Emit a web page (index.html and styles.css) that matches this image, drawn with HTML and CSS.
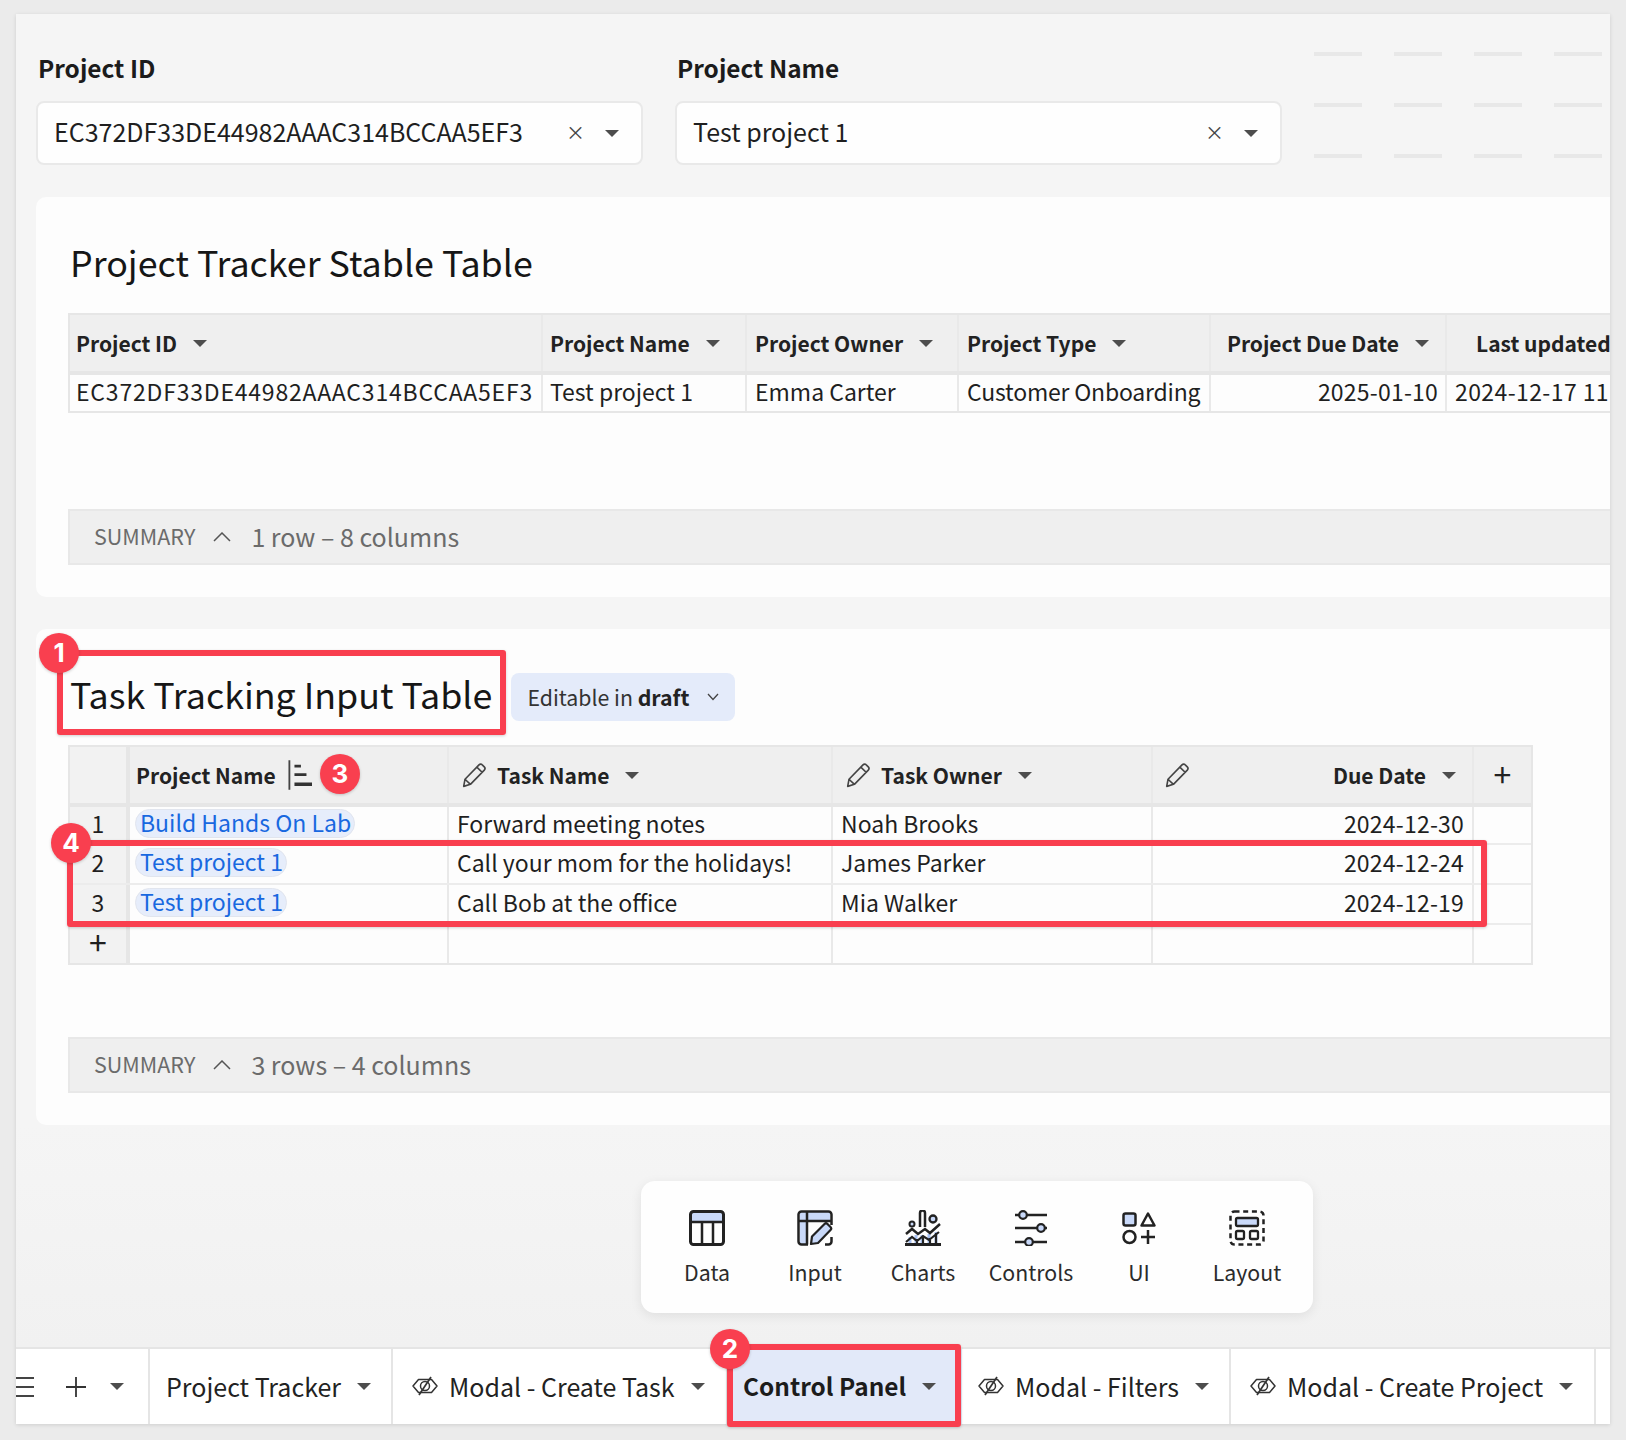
FILE: index.html
```html
<!DOCTYPE html>
<html lang="en">
<head>
<meta charset="utf-8">
<title>Control Panel</title>
<link rel="stylesheet" href="styles.css">
</head>
<body>
<svg class="defs" width="0" height="0" aria-hidden="true">
  <defs>
    <symbol id="pencil" viewBox="0 0 24 24">
      <path d="M2.500 22.500l1.200-6.600L16.600 2.600c.9-.9 2.200-.9 3 0l1.900 1.900c.8.8.8 2.100 0 3L8.700 20.600z M3.700 15.900l5 4.700 M14.600 4.700l4.900 4.800" fill="none" stroke="#444" stroke-width="1.500" stroke-linejoin="round"/>
    </symbol>
    <symbol id="eyeoff" viewBox="0 0 26 20">
      <path d="M1 10l5.500-6.500h13L25 10l-5.500 6.500h-13z" fill="none" stroke="#333" stroke-width="1.500" stroke-linejoin="round"/>
      <circle cx="13" cy="10" r="4.500" fill="none" stroke="#333" stroke-width="1.500"/>
      <path d="M19 1L7 19" fill="none" stroke="#333" stroke-width="1.700"/>
    </symbol>
  </defs>
</svg>
<div class="window">
  <main class="main">
    <section class="controls">
      <div class="control">
        <div class="control-label">Project ID</div>
        <div class="select"><span class="select-value">EC372DF33DE44982AAAC314BCCAA5EF3</span><span class="clear">×</span><span class="caret"></span></div>
      </div>
      <div class="control">
        <div class="control-label">Project Name</div>
        <div class="select"><span class="select-value">Test project 1</span><span class="clear">×</span><span class="caret"></span></div>
      </div>
      <div class="dashes">
        <i></i><i></i><i></i><i></i>
        <i></i><i></i><i></i><i></i>
        <i></i><i></i><i></i><i></i>
      </div>
    </section>

    <section class="card card-first">
      <h2 class="title">Project Tracker Stable Table</h2>
      <div class="table table-stable">
        <div class="row head">
          <div class="cell"><b>Project ID</b><span class="caret"></span></div>
          <div class="cell"><b>Project Name</b><span class="caret"></span></div>
          <div class="cell"><b>Project Owner</b><span class="caret"></span></div>
          <div class="cell"><b>Project Type</b><span class="caret"></span></div>
          <div class="cell right"><b>Project Due Date</b><span class="caret"></span></div>
          <div class="cell last-updated"><b>Last updated</b></div>
        </div>
        <div class="row body">
          <div class="cell id-cell">EC372DF33DE44982AAAC314BCCAA5EF3</div>
          <div class="cell">Test project 1</div>
          <div class="cell">Emma Carter</div>
          <div class="cell type-cell">Customer Onboarding</div>
          <div class="cell right date">2025-01-10</div>
          <div class="cell date updated-cell">2024-12-17 11:02:45</div>
        </div>
      </div>
      <div class="summary summary-stable"><span class="summary-key">SUMMARY</span><svg class="chev" viewBox="0 0 18 10"><path d="M1 9l8-8 8 8" fill="none" stroke="#555" stroke-width="1.500"/></svg><span class="summary-val">1 row – 8 columns</span></div>
    </section>

    <section class="card card-second">
      <div class="title-row">
        <h2 class="title">Task Tracking Input Table</h2>
        <div class="draft"><span>Editable in <b>draft</b></span><svg class="draft-chev" viewBox="0 0 12 8"><path d="M1 1l5 5.500L11 1" fill="none" stroke="#444" stroke-width="1.300"/></svg></div>
      </div>
      <div class="table table-input">
        <div class="row head">
          <div class="cell num"></div>
          <div class="cell"><b>Project Name</b>
            <svg class="sort" viewBox="0 0 26 32"><path d="M1.500 0v32" stroke="#444" stroke-width="2" fill="none"/><path d="M7 5h7v3H7zM7 14h13v3H7zM7 24h19v4H7z" fill="#333"/></svg>
          </div>
          <div class="cell pencil-cell"><svg class="pencil"><use href="#pencil"/></svg><b>Task Name</b><span class="caret"></span></div>
          <div class="cell pencil-cell"><svg class="pencil"><use href="#pencil"/></svg><b>Task Owner</b><span class="caret"></span></div>
          <div class="cell pencil-cell due"><svg class="pencil"><use href="#pencil"/></svg><b class="push">Due Date</b><span class="caret"></span></div>
          <div class="cell plus">+</div>
        </div>
        <div class="row body first-row">
          <div class="cell num">1</div>
          <div class="cell chip-cell"><span class="chip">Build Hands On Lab</span></div>
          <div class="cell">Forward meeting notes</div>
          <div class="cell">Noah Brooks</div>
          <div class="cell right date">2024-12-30</div>
          <div class="cell"></div>
        </div>
        <div class="row body">
          <div class="cell num">2</div>
          <div class="cell chip-cell"><span class="chip">Test project 1</span></div>
          <div class="cell">Call your mom for the holidays!</div>
          <div class="cell">James Parker</div>
          <div class="cell right date">2024-12-24</div>
          <div class="cell"></div>
        </div>
        <div class="row body">
          <div class="cell num">3</div>
          <div class="cell chip-cell"><span class="chip">Test project 1</span></div>
          <div class="cell">Call Bob at the office</div>
          <div class="cell">Mia Walker</div>
          <div class="cell right date">2024-12-19</div>
          <div class="cell"></div>
        </div>
        <div class="row body add-row">
          <div class="cell num">+</div>
          <div class="cell"></div>
          <div class="cell"></div>
          <div class="cell"></div>
          <div class="cell"></div>
          <div class="cell"></div>
        </div>
      </div>
      <div class="summary summary-input"><span class="summary-key">SUMMARY</span><svg class="chev" viewBox="0 0 18 10"><path d="M1 9l8-8 8 8" fill="none" stroke="#555" stroke-width="1.500"/></svg><span class="summary-val">3 rows – 4 columns</span></div>
    </section>

    <nav class="palette">
      <div class="tool">
        <svg class="tool-icon" viewBox="0 0 36 36"><path d="M3 2h30v10H2V3z" fill="#c9d9f9"/><rect x="1.500" y="1.500" width="33" height="33" rx="3" fill="none" stroke="#222" stroke-width="3"/><path d="M1.500 12h33M13 12v22M24 12v22" fill="none" stroke="#222" stroke-width="2.500"/></svg>
        <span>Data</span>
      </div>
      <div class="tool">
        <svg class="tool-icon" viewBox="0 0 36 36"><path d="M3 2h30v9H10v24H3z" fill="#c9d9f9"/><path d="M11 34.500H4.500a3 3 0 0 1-3-3V4.500a3 3 0 0 1 3-3h27a3 3 0 0 1 3 3V15M1.500 11h33M10 1.500v33M34.500 27v4.500a3 3 0 0 1-3 3H28" fill="none" stroke="#222" stroke-width="2.500"/><path d="M14 34l1-7.500L27.500 14c1-1 2-1 3 0l3 3c1 1 1 2 0 3L21 33z" fill="#c9d9f9" stroke="#222" stroke-width="2.200" stroke-linejoin="round"/></svg>
        <span>Input</span>
      </div>
      <div class="tool">
        <svg class="tool-icon" viewBox="0 0 36 36"><path d="M5 34V27M11 34V25M17 34V25M24 34V24M31 34V22" stroke="#a9c2f2" stroke-width="3" fill="none"/><path d="M15 17V3a2.500 2.500 0 0 1 5 0v14" fill="none" stroke="#222" stroke-width="2.500"/><circle cx="28" cy="9" r="3.500" fill="#c9d9f9" stroke="#222" stroke-width="2.300"/><circle cx="7" cy="14" r="2.500" fill="#c9d9f9" stroke="#222" stroke-width="2"/><path d="M1 24l6-5 6 5 7-5 5 4 10-9" fill="none" stroke="#222" stroke-width="2.500"/><path d="M1 32l6-5 5 4 6-5 6 4 10-8M12 33v-4M18 33v-7M25 33v-5M31 33V23" fill="none" stroke="#222" stroke-width="2.200"/><path d="M0 34.500h36" stroke="#222" stroke-width="3"/></svg>
        <span>Charts</span>
      </div>
      <div class="tool">
        <svg class="tool-icon" viewBox="0 0 36 36"><path d="M2 5h32M2 18h32M2 32h32" stroke="#222" stroke-width="2.500" fill="none"/><circle cx="10" cy="5" r="3.800" fill="#c9d9f9" stroke="#222" stroke-width="2.200"/><circle cx="28" cy="18" r="3.800" fill="#c9d9f9" stroke="#222" stroke-width="2.200"/><circle cx="16" cy="32" r="3.800" fill="#c9d9f9" stroke="#222" stroke-width="2.200"/></svg>
        <span>Controls</span>
      </div>
      <div class="tool">
        <svg class="tool-icon" viewBox="0 0 36 36"><rect x="2.500" y="3.500" width="12" height="12" rx="2" fill="#c9d9f9" stroke="#222" stroke-width="2.500"/><path d="M27 3.500l6.500 12h-13z" fill="none" stroke="#222" stroke-width="2.500" stroke-linejoin="round"/><circle cx="8.500" cy="27" r="6" fill="none" stroke="#222" stroke-width="2.500"/><path d="M27 20v14M20 27h14" fill="none" stroke="#222" stroke-width="2.500"/></svg>
        <span>UI</span>
      </div>
      <div class="tool">
        <svg class="tool-icon" viewBox="0 0 36 36"><rect x="1.500" y="1.500" width="33" height="33" rx="4" fill="none" stroke="#222" stroke-width="2.500" stroke-dasharray="5 3.700"/><rect x="7" y="8" width="22" height="8" rx="1.500" fill="#c9d9f9" stroke="#222" stroke-width="2.300"/><rect x="7" y="21" width="8" height="8" rx="1.500" fill="none" stroke="#222" stroke-width="2.300"/><rect x="21" y="21" width="8" height="8" rx="1.500" fill="none" stroke="#222" stroke-width="2.300"/></svg>
        <span>Layout</span>
      </div>
    </nav>
  </main>

  <footer class="tabbar">
    <div class="tab tab-tools">
      <svg class="burger" viewBox="0 0 18 22"><path d="M-4 2h22M-4 11h22M-4 20h22" stroke="#444" stroke-width="2.200" fill="none"/></svg>
      <svg class="tab-plus" viewBox="0 0 20 20"><path d="M10 0v20M0 10h20" stroke="#333" stroke-width="1.800" fill="none"/></svg>
      <span class="caret"></span>
    </div>
    <div class="tab tab-tracker">Project Tracker<span class="caret"></span></div>
    <div class="tab tab-create"><svg class="eye"><use href="#eyeoff"/></svg>Modal - Create Task<span class="caret"></span></div>
    <div class="tab tab-active">Control Panel<span class="caret"></span></div>
    <div class="tab tab-filters"><svg class="eye"><use href="#eyeoff"/></svg>Modal - Filters<span class="caret"></span></div>
    <div class="tab tab-project"><svg class="eye"><use href="#eyeoff"/></svg>Modal - Create Project<span class="caret"></span></div>
  </footer>
</div>

<div class="mark mark-title"></div>
<div class="mark mark-rows"></div>
<div class="mark mark-tab"></div>
<div class="badge badge-1">1</div>
<div class="badge badge-2">2</div>
<div class="badge badge-3">3</div>
<div class="badge badge-4">4</div>
</body>
</html>
```

FILE: styles.css
```css
* { box-sizing: border-box; }
html, body { margin: 0; height: 100%; }
body {
  position: relative;
  width: 1626px;
  height: 1440px;
  padding: 14px 16px 16px 16px;
  background: #ebebeb;
  font-family: "Noto Sans CJK SC", "Noto Sans", sans-serif;
  font-size: 23px;
  line-height: 32px;
  color: #1f1f1f;
  overflow: hidden;
}
.defs { position: absolute; }
.window {
  display: flex;
  flex-direction: column;
  height: 1410px;
  background: #f5f5f5;
  box-shadow: 0 1px 4px rgba(0,0,0,.12);
  overflow: hidden;
}
.main { flex: 1; min-height: 0; overflow: hidden; background: linear-gradient(#f5f5f5 1110px, #f1f1f1 1333px); }

/* filter controls */
.controls { display: flex; gap: 32px; padding: 36px 0 0 20px; height: 183px; }
.control { width: 607px; flex: none; }
.control-label { font-size: 24.4px; font-weight: 600; line-height: 36px; margin-bottom: 15px; color: #1c1c1c; padding-left: 2px; }
.select {
  display: flex;
  align-items: center;
  height: 64px;
  padding: 0 22px 0 16px;
  background: #fefefe;
  border: 2px solid #e9e9e9;
  border-radius: 8px;
  font-size: 25px;
}
.select-value { flex: 1; padding-bottom: 4px; }
.clear { font-size: 19px; color: #444; margin-right: 20px; margin-bottom: 2px; }
.dashes { display: grid; grid-template-columns: repeat(4, 48px); column-gap: 32px; row-gap: 47px; align-content: start; margin: 2px 0 0 0; }
.dashes i { display: block; height: 4px; background: #e8e8e8; }

.caret {
  display: inline-block;
  flex: none;
  width: 0;
  height: 0;
  border-left: 7px solid transparent;
  border-right: 7px solid transparent;
  border-top: 7px solid #4d4d4d;
}

/* cards */
.card { margin-left: 20px; padding-left: 32px; background: #fdfdfd; border-radius: 10px 0 0 10px; overflow: hidden; }
.card-first { padding-top: 42px; padding-bottom: 32px; }
.card-second { margin-top: 32px; padding-top: 44px; padding-bottom: 32px; }
.title { margin: 0; padding-left: 2px; font-size: 35.800px; font-weight: 400; line-height: 44px; color: #161616; }
.card-first .title { margin-bottom: 30px; }
.title-row { display: flex; align-items: center; gap: 19px; height: 48px; margin-bottom: 24px; }
.title-row .title { margin-bottom: 8px; }
.draft {
  display: flex;
  align-items: center;
  flex: none;
  height: 48px;
  width: 224px;
  padding-left: 16px;
  background: #e4ebfa;
  border-radius: 8px;
  font-size: 21.300px;
  color: #333;
}
.draft b { font-weight: 600; color: #222; }
.draft-chev { width: 12px; height: 8px; margin-left: 18px; }

/* tables */
.table { border: 2px solid #e6e6e6; font-size: 23px; }
.table-stable { width: 1640px; }
.table-input { width: 1465px; }
.row { display: grid; }
.table-stable .row { grid-template-columns: 473px 204px 212px 252px 236px 1fr; }
.table-input .row { grid-template-columns: 60px 319px 384px 320px 321px 1fr; }
.cell {
  display: flex;
  align-items: center;
  min-width: 0;
  padding: 0 8px;
  border-right: 2px solid #e9e9e9;
  white-space: nowrap;
  overflow: hidden;
}
.body .cell { padding-bottom: 4px; }
.head { background: #efefef; height: 60px; border-bottom: 4px solid #e6e6e6; }
.head .cell { gap: 16px; }
.head b { font-size: 21px; font-weight: 600; color: #222; }
.right { justify-content: flex-end; }
.date { letter-spacing: .2px; }
.id-cell { letter-spacing: .8px; padding-left: 6px; padding-right: 0; }
.type-cell { letter-spacing: -.2px; }
.updated-cell { letter-spacing: .4px; }
.table-stable .body { height: 36px; }
.table-stable .body .cell:nth-child(2) { padding-left: 7px; }
.table-stable .body .right { padding-right: 7px; }
.table-stable .head .cell:first-child { padding-left: 6px; }
.table-stable .head .cell:nth-child(2) { padding-left: 7px; }
.table-stable .head .right { padding-right: 16px; }
.last-updated { padding-left: 29px !important; }
.table-input .body { height: 40px; border-bottom: 2px solid #ececec; }
.table-input .first-row { height: 38px; }
.table-input .add-row { border-bottom: 0; height: 38px; }
.table-input .cell:last-child { border-right: 0; }
.num { justify-content: center; padding: 0; background: #f2f2f2; border-right: 4px solid #e6e6e6; overflow: visible; }
.body .num { padding: 0 0 4px; }
.add-row .num { font-size: 32px; line-height: 26px; padding: 0 0 6px; }
.plus { justify-content: center; font-size: 32px; line-height: 40px; font-weight: 400; color: #222; padding: 0 0 4px; }
.pencil-cell { padding-left: 12px; }
.head .pencil-cell { gap: 10px; }
.head .pencil-cell .caret { margin-left: 6px; }
.table-input .head .cell:nth-child(2) { padding-left: 6px; }
.due { padding-right: 16px; }
.head .due { padding-left: 11px; }
.push { margin-left: auto; }
.pencil { width: 26px; height: 26px; flex: none; }
.sort { width: 24px; height: 30px; flex: none; margin-left: -4px; }
.chip-cell { padding-left: 5px; overflow: visible; }
.chip {
  display: inline-block;
  height: 29px;
  line-height: 25px;
  padding: 0 3px 0 4px;
  background: #e6edfb;
  border: 1px solid #e1e5ee;
  border-radius: 15px;
  color: #1868e0;
}

.summary {
  display: flex;
  align-items: center;
  height: 56px;
  padding-left: 24px;
  background: #efefef;
  border: 2px solid #e8e8e8;
  border-right: 0;
  color: #6b6b6b;
}
.summary-stable { margin-top: 96px; }
.summary-input { margin-top: 72px; }
.summary-key { font-size: 21.500px; padding-bottom: 2px; }
.chev { width: 18px; height: 10px; margin: 0 20px 0 18px; }
.summary-val { font-size: 25px; padding-bottom: 3px; }

/* floating palette */
.palette {
  display: grid;
  grid-template-columns: repeat(6, 108px);
  width: 672px;
  height: 132px;
  margin: 56px 0 0 625px;
  padding: 29px 12px 0;
  background: #fefefe;
  border-radius: 14px;
  box-shadow: 0 3px 12px rgba(0,0,0,.08);
}
.tool { display: flex; flex-direction: column; align-items: center; gap: 10px; font-size: 21.300px; color: #2b2b2b; line-height: 32px; }
.tool-icon { width: 36px; height: 36px; }

/* tabs */
.tabbar { display: flex; flex: none; height: 77px; background: #fff; border-top: 2px solid #e5e5e5; font-size: 25px; color: #222; }
.tab { display: flex; align-items: center; height: 100%; padding-bottom: 2px; border-right: 2px solid #e5e5e5; flex: none; white-space: nowrap; }
.tab-tools { width: 134px; padding-bottom: 0; }
.burger { width: 18px; height: 22px; flex: none; }
.tab-plus { width: 20px; height: 20px; margin-left: 32px; flex: none; }
.tab-tracker { width: 243px; padding-left: 16px; }
.tab-create { width: 335px; padding-left: 19px; }
.tab-active { width: 234px; padding-left: 15px; background: #e2e9f9; font-size: 24.400px; font-weight: 600; color: #1c1c1c; border-right: 0; }
.tab-filters { width: 269px; padding-left: 16px; }
.tab-project { width: 365px; padding-left: 19px; }
.eye { width: 26px; height: 20px; flex: none; margin-right: 11px; }
.tab .caret { margin: 2px 0 0 16px; }
.tab-tools .caret { margin: 0 0 0 24px; }

/* annotation overlays */
.mark {
  position: absolute;
  border: 6px solid #f93f4f;
  border-radius: 3px;
  box-shadow: 0 1px 3px rgba(0,0,0,.18);
}
.mark-title { left: 57px; top: 650px; width: 449px; height: 85px; }
.mark-rows { left: 67px; top: 840px; width: 1420px; height: 87px; }
.mark-tab { left: 727px; top: 1344px; width: 234px; height: 83px; }
.badge {
  position: absolute;
  width: 40px;
  height: 40px;
  border-radius: 50%;
  background: #f93f4f;
  color: #fff;
  font-family: "Inter", sans-serif;
  font-weight: 700;
  font-size: 26px;
  line-height: 40px;
  text-align: center;
  box-shadow: 0 1px 3px rgba(0,0,0,.2);
}
.badge-1 { left: 39px; top: 633px; }
.badge-2 { left: 710px; top: 1329px; }
.badge-3 { left: 320px; top: 754px; }
.badge-4 { left: 51px; top: 823px; }
```
